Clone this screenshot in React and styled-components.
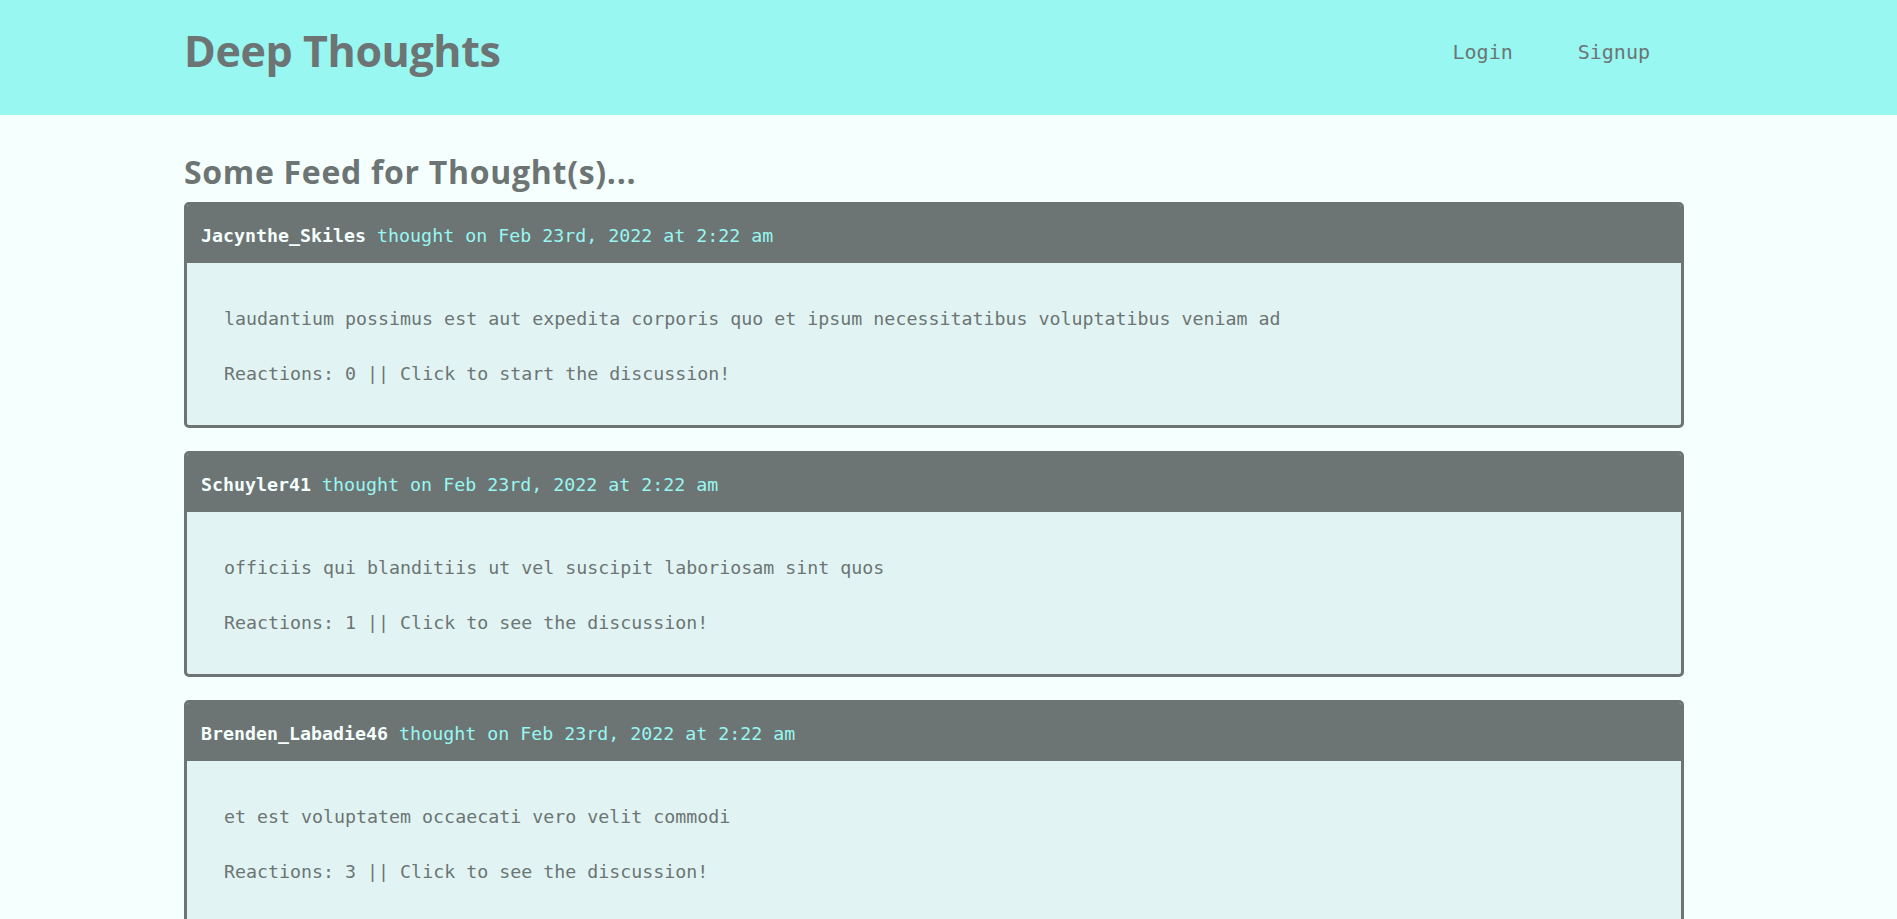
import React from "react";
import styled, { createGlobalStyle } from "styled-components";

const thoughts = [
  {
    username: "Jacynthe_Skiles",
    createdAt: "Feb 23rd, 2022 at 2:22 am",
    text: "laudantium possimus est aut expedita corporis quo et ipsum necessitatibus voluptatibus veniam ad",
    reactions: 0,
  },
  {
    username: "Schuyler41",
    createdAt: "Feb 23rd, 2022 at 2:22 am",
    text: "officiis qui blanditiis ut vel suscipit laboriosam sint quos",
    reactions: 1,
  },
  {
    username: "Brenden_Labadie46",
    createdAt: "Feb 23rd, 2022 at 2:22 am",
    text: "et est voluptatem occaecati vero velit commodi",
    reactions: 3,
  },
  {
    username: "Maryse.Kuhic",
    createdAt: "Feb 23rd, 2022 at 2:22 am",
    text: "quia dolorem voluptas sed ut rerum nemo",
    reactions: 2,
  },
  {
    username: "Devante_Hane",
    createdAt: "Feb 23rd, 2022 at 2:22 am",
    text: "aliquam tempore repellat nisi sit",
    reactions: 0,
  },
  {
    username: "Lula.Rath",
    createdAt: "Feb 23rd, 2022 at 2:22 am",
    text: "deleniti in omnis harum minima accusamus",
    reactions: 4,
  },
];

const GlobalStyle = createGlobalStyle`
  * {
    box-sizing: border-box;
  }
  body {
    margin: 0;
    background: #f5fffd;
    color: #6c7474;
    font-family: "DejaVu Sans Mono", "Liberation Mono", monospace;
  }
`;

const Header = () => (
  <HeaderBar>
    <Container>
      <Row>
        <Logo>Deep Thoughts</Logo>
        <Nav>
          <NavLink href="#login">Login</NavLink>
          <NavLink href="#signup">Signup</NavLink>
        </Nav>
      </Row>
    </Container>
  </HeaderBar>
);

const ThoughtCard = ({ thought }) => (
  <Card>
    <CardHeader>
      <Username>{thought.username}</Username> thought on {thought.createdAt}
    </CardHeader>
    <CardBody>
      <Text>{thought.text}</Text>
      <Text>
        Reactions: {thought.reactions} || Click to{" "}
        {thought.reactions ? "see" : "start"} the discussion!
      </Text>
    </CardBody>
  </Card>
);

export default function App() {
  return (
    <>
      <GlobalStyle />
      <Header />
      <Main>
        <Container>
          <Title>Some Feed for Thought(s)...</Title>
          {thoughts.map((t) => (
            <ThoughtCard key={t.username} thought={t} />
          ))}
        </Container>
      </Main>
    </>
  );
}

const HeaderBar = styled.header`
  background: #98f7f1;
  height: 115px;
  padding-bottom: 14px;
  display: flex;
  align-items: center;
`;

const Container = styled.div`
  width: 100%;
  max-width: 1529px;
  margin: 0 auto;
  padding-right: 29px;
`;

const Row = styled.div`
  display: flex;
  justify-content: space-between;
  align-items: center;
`;

const Logo = styled.h1`
  margin: 0;
  font-family: "Open Sans", "Liberation Sans", sans-serif;
  font-weight: 700;
  font-size: 43px;
  letter-spacing: -0.4px;
  line-height: 1;
  color: #6c7474;
`;

const Nav = styled.nav`
  display: flex;
  gap: 65px;
  padding-right: 34px;
  margin-top: 2px;
`;

const NavLink = styled.a`
  font-size: 20px;
  line-height: 1;
  color: #6c7474;
  text-decoration: none;
`;

const Main = styled.main`
  padding-top: 39px;
`;

const Title = styled.h2`
  margin: 0 0 12px;
  font-family: "Open Sans", "Liberation Sans", sans-serif;
  font-weight: 700;
  font-size: 32px;
  letter-spacing: 0.7px;
  line-height: 36px;
  color: #6c7474;
`;

const Card = styled.div`
  border: 3px solid #6c7474;
  border-radius: 5px;
  overflow: hidden;
  margin-bottom: 23px;
  background: #e1f4f3;
`;

const CardHeader = styled.div`
  background: #6c7474;
  color: #98f7f1;
  font-size: 18.3px;
  line-height: 27px;
  padding: 17px 14px 14px;
`;

const Username = styled.span`
  color: #f5fffd;
  font-weight: 700;
`;

const CardBody = styled.div`
  display: flex;
  flex-direction: column;
  gap: 28px;
  padding: 42px 37px 38px;
`;

const Text = styled.p`
  margin: 0;
  font-size: 18.3px;
  line-height: 27px;
  color: #6c7474;
`;
